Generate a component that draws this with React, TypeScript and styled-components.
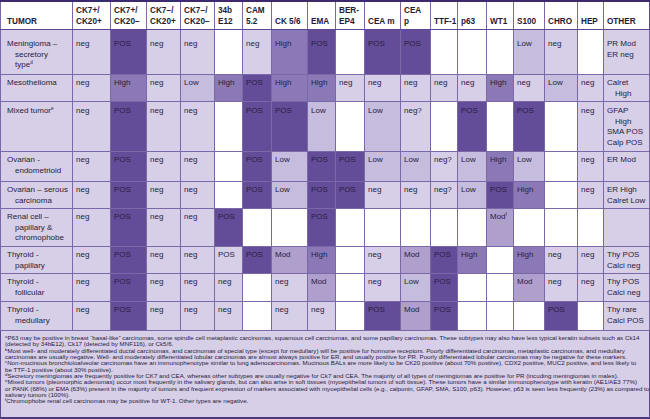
import React from 'react';
import styled, { createGlobalStyle } from 'styled-components';

type Level = 'w' | 'l' | 'lo' | 'm' | 'h' | 'p';

const colors: Record<Level, string> = {
  w: '#ffffff',
  l: '#d6cfe7',
  lo: '#c6bcdd',
  m: '#ae9fcd',
  h: '#8b79b7',
  p: '#634d99',
};

const GlobalStyle = createGlobalStyle`
  body {
    margin: 0;
    background: #ffffff;
    font-family: "Liberation Sans", Arial, sans-serif;
    color: #2a2040;
  }
`;

const Figure = styled.div`
  width: 650px;
  height: 419px;
  box-sizing: border-box;
  overflow: hidden;
`;

const Table = styled.table`
  width: 650px;
  table-layout: fixed;
  border-collapse: collapse;
  border-top: 2px solid #3d2a6e;
  border-left: 1px solid #5c4891;
  border-right: 1px solid #5c4891;
`;

const HeadCell = styled.th<{ $first?: boolean }>`
  height: 25px;
  padding: 0 2px 2px ${({ $first }) => ($first ? '6px' : '3px')};
  text-align: left;
  vertical-align: bottom;
  font-size: 8.2px;
  line-height: 11px;
  font-weight: bold;
  color: #231a36;
  background: #ffffff;
  border-left: 1px solid #7a68a9;
  border-bottom: 1px solid #5c4891;
  white-space: nowrap;
`;

const Row = styled.tr<{ $h: number; $top: number }>`
  height: ${({ $h }) => $h}px;

  & > td {
    padding-top: ${({ $top }) => $top}px;
  }
`;

const Cell = styled.td<{ $level: Level }>`
  padding: 3px 2px 0 3px;
  vertical-align: top;
  font-size: 8px;
  line-height: 10.7px;
  background: ${({ $level }) => colors[$level]};
  border: 1px solid #7a68a9;
  white-space: nowrap;
`;

const SideCell = styled(Cell)`
  padding-left: 6px;
`;

const Line = styled.div<{ $indent?: boolean }>`
  padding-left: ${({ $indent }) => ($indent ? '8px' : '0')};
`;

const Sup = styled.sup`
  font-size: 4.5px;
  line-height: 0;
  vertical-align: 3px;
`;

const Notes = styled.div`
  box-sizing: border-box;
  width: 650px;
  height: 88px;
  padding: 4px 1px 0 4px;
  background: #d6cfe7;
  border: 1px solid #5c4891;
  border-top: none;
  border-bottom: 2px solid #4a3880;
  font-size: 6.2px;
  line-height: 6.35px;
  color: #2a2040;
  overflow: hidden;
`;

const NoteLine = styled.div`
  white-space: nowrap;
`;

const NoteSup = styled.sup`
  font-size: 4.3px;
  line-height: 0;
  vertical-align: 2px;
`;

const colWidths = [72, 38, 36, 34, 34, 28, 29, 36, 28, 29, 36, 30, 27, 29, 27, 31, 33, 26, 46];

const headers: string[][] = [
  ['TUMOR'],
  ['CK7+/', 'CK20+'],
  ['CK7+/', 'CK20−'],
  ['CK7−/', 'CK20+'],
  ['CK7−/', 'CK20−'],
  ['34b', 'E12'],
  ['CAM', '5.2'],
  ['CK 5/6'],
  ['EMA'],
  ['BER-', 'EP4'],
  ['CEA m'],
  ['CEA', 'p'],
  ['TTF-1'],
  ['p63'],
  ['WT1'],
  ['S100'],
  ['CHRO'],
  ['HEP'],
  ['OTHER'],
];

type Mark = [string, Level, string?];

interface TumorRow {
  name: string[];
  sup?: string;
  height: number;
  top: number;
  marks: Mark[];
  other: { text: string; indent?: boolean }[];
}

const rows: TumorRow[] = [
  {
    name: ['Meningioma –', 'secretory', 'type'],
    sup: 'd',
    height: 45,
    top: 9,
    marks: [
      ['neg', 'l'], ['POS', 'p'], ['neg', 'l'], ['neg', 'l'], ['', 'w'], ['neg', 'l'],
      ['High', 'h'], ['POS', 'p'], ['', 'w'], ['POS', 'p'], ['POS', 'p'], ['', 'w'],
      ['', 'w'], ['', 'w'], ['Low', 'lo'], ['neg', 'l'], ['', 'w'],
    ],
    other: [{ text: 'PR Mod' }, { text: 'ER neg' }],
  },
  {
    name: ['Mesothelioma'],
    height: 27,
    top: 3,
    marks: [
      ['neg', 'l'], ['High', 'h'], ['neg', 'l'], ['Low', 'lo'], ['High', 'h'], ['POS', 'p'],
      ['High', 'h'], ['High', 'h'], ['neg', 'l'], ['neg', 'l'], ['neg', 'l'], ['neg', 'l'],
      ['neg', 'l'], ['High', 'h'], ['neg', 'l'], ['Low', 'lo'], ['neg', 'l'],
    ],
    other: [{ text: 'Calret' }, { text: 'High', indent: true }],
  },
  {
    name: ['Mixed tumor'],
    sup: 'e',
    height: 50,
    top: 4,
    marks: [
      ['neg', 'l'], ['POS', 'p'], ['neg', 'l'], ['neg', 'l'], ['', 'w'], ['POS', 'p'],
      ['POS', 'p'], ['Low', 'lo'], ['', 'w'], ['Low', 'lo'], ['neg?', 'l'], ['', 'w'],
      ['POS', 'p'], ['', 'w'], ['POS', 'p'], ['', 'w'], ['neg', 'l'],
    ],
    other: [{ text: 'GFAP' }, { text: 'High', indent: true }, { text: 'SMA POS' }, { text: 'Calp POS' }],
  },
  {
    name: ['Ovarian -', 'endometrioid'],
    height: 30,
    top: 3,
    marks: [
      ['neg', 'l'], ['POS', 'p'], ['neg', 'l'], ['neg', 'l'], ['', 'w'], ['POS', 'p'],
      ['Low', 'lo'], ['POS', 'p'], ['POS', 'p'], ['Low', 'lo'], ['Low', 'lo'], ['neg?', 'l'],
      ['Low', 'lo'], ['High', 'h'], ['Low', 'lo'], ['', 'w'], ['neg', 'l'],
    ],
    other: [{ text: 'ER Mod' }],
  },
  {
    name: ['Ovarian – serous', 'carcinoma'],
    height: 27,
    top: 3,
    marks: [
      ['neg', 'l'], ['POS', 'p'], ['neg', 'l'], ['neg', 'l'], ['', 'w'], ['POS', 'p'],
      ['Low', 'lo'], ['POS', 'p'], ['POS', 'p'], ['neg', 'l'], ['neg', 'l'], ['neg?', 'l'],
      ['Low', 'lo'], ['POS', 'p'], ['High', 'h'], ['', 'w'], ['neg', 'l'],
    ],
    other: [{ text: 'ER High' }, { text: 'Calret Low' }],
  },
  {
    name: ['Renal cell –', 'papillary &', 'chromophobe'],
    height: 38,
    top: 3,
    marks: [
      ['neg', 'l'], ['POS', 'p'], ['neg', 'l'], ['neg', 'l'], ['POS', 'p'], ['', 'w'],
      ['', 'w'], ['POS', 'p'], ['', 'w'], ['', 'w'], ['', 'w'], ['', 'w'],
      ['', 'w'], ['Mod', 'm', 'f'], ['', 'w'], ['', 'w'], ['', 'w'],
    ],
    other: [],
  },
  {
    name: ['Thyroid -', 'papillary'],
    height: 27,
    top: 3,
    marks: [
      ['neg', 'l'], ['POS', 'p'], ['neg', 'l'], ['neg', 'l'], ['POS', 'l'], ['POS', 'p'],
      ['Mod', 'm'], ['High', 'h'], ['', 'w'], ['neg', 'l'], ['Mod', 'm'], ['POS', 'p'],
      ['High', 'h'], ['', 'w'], ['High', 'h'], ['neg', 'l'], ['neg', 'l'],
    ],
    other: [{ text: 'Thy POS' }, { text: 'Calci neg' }],
  },
  {
    name: ['Thyroid -', 'follicular'],
    height: 28,
    top: 3,
    marks: [
      ['neg', 'l'], ['POS', 'p'], ['neg', 'l'], ['neg', 'l'], ['neg', 'l'], ['', 'w'],
      ['neg', 'l'], ['Mod', 'm'], ['', 'w'], ['neg', 'l'], ['Low', 'lo'], ['POS', 'p'],
      ['', 'w'], ['', 'w'], ['Mod', 'm'], ['neg', 'l'], ['neg', 'l'],
    ],
    other: [{ text: 'Thy POS' }, { text: 'Calci neg' }],
  },
  {
    name: ['Thyroid -', 'medullary'],
    height: 29,
    top: 3,
    marks: [
      ['neg', 'l'], ['POS', 'p'], ['neg', 'l'], ['neg', 'l'], ['neg', 'l'], ['', 'w'],
      ['neg', 'l'], ['neg', 'l'], ['', 'w'], ['POS', 'p'], ['Mod', 'm'], ['POS', 'p'],
      ['', 'w'], ['', 'w'], ['', 'w'], ['POS', 'p'], ['', 'w'],
    ],
    other: [{ text: 'Thy rare' }, { text: 'Calci POS' }],
  },
];

const notes: { sup?: string; text: string }[] = [
  { sup: 'a', text: 'P63 may be positive in breast “basal-like” carcinomas, some spindle cell metaplastic carcinomas, squamous cell carcinomas, and some papillary carcinomas. These subtypes may also have less typical keratin subsets such as Ck14' },
  { text: '(detected by 34bE12), Ck17 (detected by MNF116), or Ck5/6.' },
  { sup: 'b', text: 'Most well- and moderately differentiated ductal carcinomas, and carcinomas of special type (except for medullary) will be positive for hormone receptors. Poorly differentiated carcinomas, metaplastic carcinomas, and medullary' },
  { text: 'carcinomas are usually negative. Well- and moderately differentiated lobular carcinomas are almost always positive for ER, and usually positive for PR. Poorly differentiated lobular carcinomas may be negative for these markers.' },
  { sup: 'c', text: 'Non-mucinous bronchioloalveolar carcinomas have an immunophenotype similar to lung adenocarcinomas. Mucinous BALs are more likely to be CK20 positive (about 70% positive), CDX2 positive, MUC2 positive, and less likely to' },
  { text: 'be TTF-1 positive (about 30% positive).' },
  { sup: 'd', text: 'Secretory meningiomas are frequently positive for CK7 and CEA, whereas other subtypes are usually negative for Ck7 and CEA. The majority of all types of meningiomas are positive for PR (incuding meningiomas in males).' },
  { sup: 'e', text: 'Mixed tumors (pleomorphic adenomas) occur most frequently in the salivary glands, but can also arise in soft tissues (myoepithelial tumors of soft tissue). These tumors have a similar immunophenotype with keratin (AE1/AE3 77%)' },
  { text: 'or PANK (68%) or EMA (63%) present in the majority of tumors and frequent expression of markers associated with myoepithelial cells (e.g., calponin, GFAP, SMA, S100, p63). However, p63 is seen less frequently (23%) as compared to' },
  { text: 'salivary tumors (100%).' },
  { sup: 'f', text: 'Chromophobe renal cell carcinomas may be positive for WT-1. Other types are negative.' },
];

const App: React.FC = () => {
  return (
    <Figure>
      <GlobalStyle />
      <Table>
        <colgroup>
          {colWidths.map((w, i) => (
            <col key={i} style={{ width: w }} />
          ))}
        </colgroup>
        <thead>
          <tr>
            {headers.map((h, i) => (
              <HeadCell key={i} $first={i === 0}>
                {h.map((line, j) => (
                  <div key={j}>{line}</div>
                ))}
              </HeadCell>
            ))}
          </tr>
        </thead>
        <tbody>
          {rows.map((row, r) => (
            <Row key={r} $h={row.height} $top={row.top}>
              <SideCell $level="l">
                {row.name.map((line, j) => (
                  <Line key={j} $indent={j > 0}>
                    {line}
                    {j === row.name.length - 1 && row.sup && <Sup>{row.sup}</Sup>}
                  </Line>
                ))}
              </SideCell>
              {row.marks.map(([text, level, sup], c) => (
                <Cell key={c} $level={level}>
                  {text}
                  {sup && <Sup>{sup}</Sup>}
                </Cell>
              ))}
              <Cell $level="l">
                {row.other.map((o, j) => (
                  <Line key={j} $indent={o.indent}>
                    {o.text}
                  </Line>
                ))}
              </Cell>
            </Row>
          ))}
        </tbody>
      </Table>
      <Notes>
        {notes.map((n, i) => (
          <NoteLine key={i}>
            {n.sup && <NoteSup>{n.sup}</NoteSup>}
            {n.text}
          </NoteLine>
        ))}
      </Notes>
    </Figure>
  );
};

export default App;
